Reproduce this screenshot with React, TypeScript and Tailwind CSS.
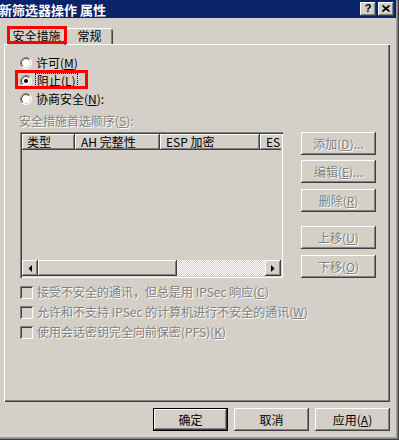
import React from "react";

const raised =
  "bg-[#d4d0c8] shadow-[inset_-1px_-1px_#404040,inset_1px_1px_#ffffff,inset_-2px_-2px_#808080,inset_2px_2px_#d4d0c8]";
const disabledText = "text-[#808080] [text-shadow:1px_1px_0_#ffffff]";

function Radio({ checked }: { checked?: boolean }) {
  return (
    <svg width="12" height="12" viewBox="0 0 12 12" className="shrink-0">
      <defs>
        <clipPath id="rtl">
          <polygon points="0,0 12,0 0,12" />
        </clipPath>
        <clipPath id="rbr">
          <polygon points="12,0 12,12 0,12" />
        </clipPath>
      </defs>
      <circle cx="6" cy="6" r="5.5" fill="#ffffff" />
      <circle cx="6" cy="6" r="5.5" fill="none" stroke="#808080" clipPath="url(#rtl)" />
      <circle cx="6" cy="6" r="5.5" fill="none" stroke="#ffffff" clipPath="url(#rbr)" />
      <circle cx="6" cy="6" r="4.5" fill="none" stroke="#404040" clipPath="url(#rtl)" />
      <circle cx="6" cy="6" r="4.5" fill="none" stroke="#d4d0c8" clipPath="url(#rbr)" />
      {checked && <circle cx="6" cy="6" r="2" fill="#000000" />}
    </svg>
  );
}

function Checkbox() {
  return (
    <div className="w-[13px] h-[13px] shrink-0 bg-[#d4d0c8] shadow-[inset_1px_1px_#808080,inset_-1px_-1px_#ffffff,inset_2px_2px_#404040,inset_-2px_-2px_#d4d0c8]" />
  );
}

function Btn({
  children,
  disabled,
  isDefault,
  className = "",
}: {
  children: React.ReactNode;
  disabled?: boolean;
  isDefault?: boolean;
  className?: string;
}) {
  return (
    <div
      className={`w-[75px] h-[23px] flex items-center justify-center ${
        isDefault ? "border border-black" : ""
      } ${className}`}
    >
      <div
        className={`w-full h-full flex items-center justify-center leading-none whitespace-nowrap ${raised} ${
          disabled ? disabledText : "text-black"
        }`}
      >
        {children}
      </div>
    </div>
  );
}

function Arrow({ dir }: { dir: "left" | "right" }) {
  return (
    <div className={`w-[16px] h-[16px] shrink-0 flex items-center justify-center ${raised}`}>
      <svg width="4" height="7" viewBox="0 0 4 7">
        {dir === "left" ? (
          <polygon points="4,0 4,7 0.5,3.5" fill="#000" />
        ) : (
          <polygon points="0,0 0,7 3.5,3.5" fill="#000" />
        )}
      </svg>
    </div>
  );
}

export default function App() {
  return (
    <div className="w-[399px] h-[440px] bg-[#d4d0c8] overflow-hidden relative font-['Noto_Sans_CJK_SC',sans-serif] text-[12px] text-black shadow-[inset_-1px_-1px_#404040,inset_-2px_-2px_#808080,inset_-3px_-3px_#a0a0a0]">
      <div className="flex flex-col">
        {/* Title bar */}
        <div className="w-[396px] h-[18px] bg-[#0a246a] flex items-center justify-between">
          <span className="text-white font-bold text-[13px] leading-none -ml-[1px] whitespace-nowrap">
            新筛选器操作 属性
          </span>
          <div className="flex gap-[2px] pr-[2px]">
            <div className={`w-[16px] h-[14px] flex items-center justify-center ${raised}`}>
              <span className="font-['Liberation_Sans',sans-serif] font-bold text-[11px] leading-none text-black -mt-[1px]">
                ?
              </span>
            </div>
            <div className={`w-[16px] h-[14px] flex items-center justify-center ${raised}`}>
              <svg width="8" height="7" viewBox="0 0 8 7" className="-mt-[1px]">
                <path d="M0.5 0.5 L7.5 6.5 M7.5 0.5 L0.5 6.5" stroke="#000" strokeWidth="1.6" />
              </svg>
            </div>
          </div>
        </div>

        {/* Tabs */}
        <div className="flex items-end pl-[7px] mt-[8px] h-[18px] relative z-10">
          <div className="relative w-[59px] h-[19px] -mb-px bg-[#d4d0c8] rounded-t-[2px] shadow-[inset_1px_1px_#ffffff,inset_-1px_0_#404040,inset_-2px_0_#808080] flex items-center justify-center leading-none">
            安全措施
            <div className="absolute left-0 top-0 w-[60px] h-[18px] border-[3px] border-[#ff0000]" />
          </div>
          <div className="w-[47px] h-[16px] bg-[#d4d0c8] rounded-tr-[2px] shadow-[inset_0_1px_#ffffff,inset_-1px_0_#404040,inset_-2px_0_#808080] flex items-center justify-center leading-none">
            常规
          </div>
        </div>

        {/* Panel */}
        <div className="ml-[4px] w-[386px] h-[358px] shadow-[inset_1px_1px_#ffffff,inset_-1px_-1px_#404040,inset_-2px_-2px_#808080] flex flex-col pl-[16px] pt-[10px]">
          <div className="flex items-center gap-[4px] h-[18px] leading-none">
            <Radio />
            <span>
              许可(<span className="underline">M</span>)
            </span>
          </div>
          <div className="relative flex items-center gap-[4px] h-[18px] leading-none">
            <Radio checked />
            <span className="outline outline-1 outline-dotted outline-black px-[1px] py-[1px]">
              阻止(<span className="underline">L</span>)
            </span>
            <div className="absolute left-[-5px] top-[-2px] w-[73px] h-[19px] border-[3px] border-[#ff0000]" />
          </div>
          <div className="flex items-center gap-[4px] h-[18px] leading-none">
            <Radio />
            <span>
              协商安全(<span className="underline">N</span>):
            </span>
          </div>

          <div className={`mt-[4px] -ml-[1px] h-[18px] flex items-center leading-none ${disabledText}`}>
            安全措施首选顺序(<span className="underline">S</span>):
          </div>

          <div className="mt-[2px] flex">
            {/* List view */}
            <div className="w-[263px] h-[146px] p-[2px] flex flex-col bg-[#d4d0c8] shadow-[inset_1px_1px_#808080,inset_2px_2px_#404040,inset_-1px_-1px_#ffffff,inset_-2px_-2px_#d4d0c8]">
              <div className="flex h-[16px] overflow-hidden leading-none whitespace-nowrap">
                <div className={`w-[53px] shrink-0 flex items-center pl-[5px] ${raised}`}>类型</div>
                <div className={`w-[85px] shrink-0 flex items-center pl-[6px] ${raised}`}>AH 完整性</div>
                <div className={`w-[100px] shrink-0 flex items-center pl-[6px] ${raised}`}>ESP 加密</div>
                <div className={`w-[85px] shrink-0 flex items-center pl-[6px] ${raised}`}>ESP 完整性</div>
              </div>
              <div className="flex-1" />
              <div className="flex h-[16px]">
                <Arrow dir="left" />
                <div className={`w-[139px] h-[16px] shrink-0 ${raised}`} />
                <div className="flex-1 h-[16px] bg-[repeating-conic-gradient(#ffffff_0%_25%,#d4d0c8_0%_50%)] [background-size:2px_2px]" />
                <Arrow dir="right" />
              </div>
            </div>

            {/* Side buttons */}
            <div className="ml-[18px] flex flex-col">
              <Btn disabled>
                添加(<span className="underline">D</span>)...
              </Btn>
              <Btn disabled className="mt-[5px]">
                编辑(<span className="underline">E</span>)...
              </Btn>
              <Btn disabled className="mt-[6px]">
                删除(<span className="underline">R</span>)
              </Btn>
              <Btn disabled className="mt-[14px]">
                上移(<span className="underline">U</span>)
              </Btn>
              <Btn disabled className="mt-[6px]">
                下移(<span className="underline">O</span>)
              </Btn>
            </div>
          </div>

          <div className="mt-[4px] flex flex-col">
            <div className="h-[20px] flex items-center gap-[4px] leading-none">
              <Checkbox />
              <span className={disabledText}>
                接受不安全的通讯，但总是用 IPSec 响应(<span className="underline">C</span>)
              </span>
            </div>
            <div className="h-[20px] flex items-center gap-[4px] leading-none">
              <Checkbox />
              <span className={disabledText}>
                允许和不支持 IPSec 的计算机进行不安全的通讯(<span className="underline">W</span>)
              </span>
            </div>
            <div className="h-[20px] flex items-center gap-[4px] leading-none">
              <Checkbox />
              <span className={disabledText}>
                使用会话密钥完全向前保密(PFS)(<span className="underline">K</span>)
              </span>
            </div>
          </div>
        </div>

        {/* Bottom buttons */}
        <div className="mt-[6px] flex justify-end gap-[6px] pr-[9px]">
          <Btn isDefault>确定</Btn>
          <Btn>取消</Btn>
          <Btn>
            应用(<span className="underline">A</span>)
          </Btn>
        </div>
      </div>
    </div>
  );
}
